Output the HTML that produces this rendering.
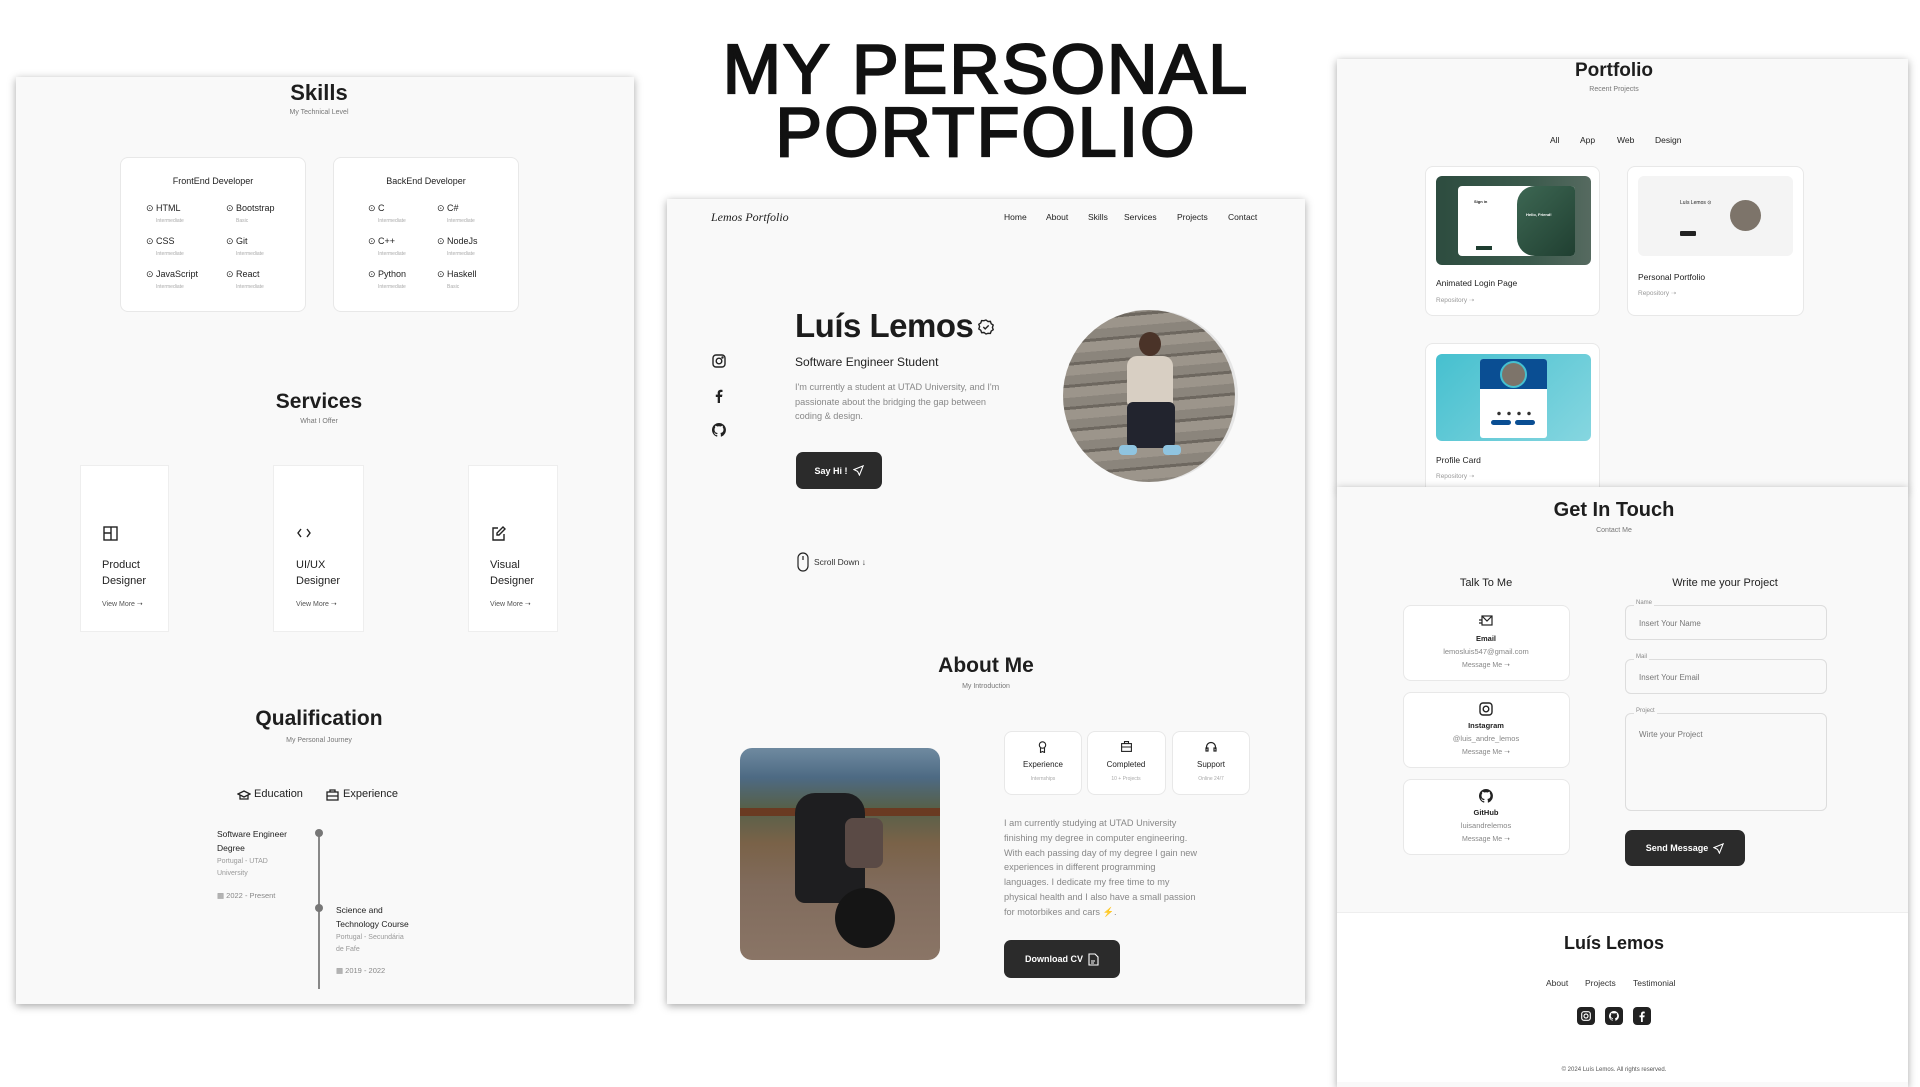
<!DOCTYPE html>
<html><head><meta charset="utf-8"><style>
*{margin:0;padding:0;box-sizing:border-box}
body{width:1920px;height:1080px;background:#fff;position:relative;overflow:hidden;font-family:"Liberation Sans",sans-serif;color:#222}
.a{position:absolute;white-space:nowrap}
.c{transform:translateX(-50%);text-align:center}
.panel{position:absolute;background:#f9f9f9;box-shadow:0 2px 8px rgba(0,0,0,.35)}
.h{font-weight:bold;color:#1e1e1e}
.sub{font-size:8px;color:#777}
.card{position:absolute;background:#fff;border:1px solid #e8e8e8;border-radius:8px}
.btn{position:absolute;background:#2b2b2b;color:#fff;border-radius:7px;font-size:9px;font-weight:bold;display:flex;align-items:center;justify-content:center;gap:5px}
.sk{font-size:9px;color:#222}
.sk small{display:block;font-size:5px;color:#aaa;margin-top:4px;margin-left:10px}
.gray{color:#777}
svg{display:block}
</style></head><body>

<!-- Title -->
<div class="a c" style="left:986px;top:38px;font-size:70px;font-weight:normal;-webkit-text-stroke:2.2px #111;line-height:63px;color:#111;letter-spacing:2px">MY PERSONAL<br>PORTFOLIO</div>

<!-- LEFT PANEL -->
<div class="panel" style="left:16px;top:77px;width:618px;height:927px"></div>
<div class="a c h" style="left:319px;top:80px;font-size:22px">Skills</div>
<div class="a c sub" style="left:319px;top:109px;font-size:7px">My Technical Level</div>

<div class="card" style="left:120px;top:157px;width:186px;height:155px"></div>
<div class="card" style="left:333px;top:157px;width:186px;height:155px"></div>
<div class="a c" style="left:213px;top:176px;font-size:9px">FrontEnd Developer</div>
<div class="a c" style="left:426px;top:176px;font-size:9px">BackEnd Developer</div>

<div class="a c h" style="left:319px;top:390px;font-size:21px">Services</div>
<div class="a c sub" style="left:319px;top:418px;font-size:7px">What I Offer</div>

<div class="a" style="left:80px;top:465px;width:89px;height:167px;background:#fff;border:1px solid #eee"></div>
<div class="a" style="left:273px;top:465px;width:91px;height:167px;background:#fff;border:1px solid #eee"></div>
<div class="a" style="left:468px;top:465px;width:90px;height:167px;background:#fff;border:1px solid #eee"></div>

<svg class="a" style="left:103px;top:526px" width="15" height="15" viewBox="0 0 15 15" fill="none" stroke="#222" stroke-width="1.4"><rect x="1" y="1" width="13" height="13"/><path d="M8 1v13M1 7h7"/></svg>
<svg class="a" style="left:297px;top:527px" width="14" height="12" viewBox="0 0 14 12" fill="none" stroke="#222" stroke-width="1.4"><path d="M4 2L1 6l3 4M10 2l3 4-3 4"/></svg>
<svg class="a" style="left:491px;top:526px" width="15" height="15" viewBox="0 0 15 15" fill="none" stroke="#222" stroke-width="1.4"><path d="M7 2H2v12h11V8"/><path d="M12 1l2 2-6 6H6V7z"/></svg>

<div class="a" style="left:102px;top:557px;font-size:11px;line-height:16px">Product<br>Designer</div>
<div class="a" style="left:296px;top:557px;font-size:11px;line-height:16px">UI/UX<br>Designer</div>
<div class="a" style="left:490px;top:557px;font-size:11px;line-height:16px">Visual<br>Designer</div>
<div class="a" style="left:102px;top:600px;font-size:7px;color:#555">View More ➝</div>
<div class="a" style="left:296px;top:600px;font-size:7px;color:#555">View More ➝</div>
<div class="a" style="left:490px;top:600px;font-size:7px;color:#555">View More ➝</div>

<div class="a c h" style="left:319px;top:707px;font-size:21px">Qualification</div>
<div class="a c sub" style="left:319px;top:737px;font-size:7px">My Personal Journey</div>

<svg class="a" style="left:237px;top:789px" width="14" height="12" viewBox="0 0 14 12" fill="none" stroke="#222" stroke-width="1.3"><path d="M1 5l6-3 6 3-6 3z"/><path d="M3 6v4h8V6"/></svg>
<div class="a" style="left:254px;top:788px;font-size:11px">Education</div>
<svg class="a" style="left:326px;top:789px" width="13" height="12" viewBox="0 0 13 12" fill="none" stroke="#222" stroke-width="1.3"><rect x="1" y="3" width="11" height="8"/><path d="M4 3V1h5v2M1 7h11"/></svg>
<div class="a" style="left:343px;top:788px;font-size:11px">Experience</div>

<div class="a" style="left:318px;top:833px;width:1.5px;height:156px;background:#888"></div>
<div class="a" style="left:315px;top:829px;width:8px;height:8px;border-radius:50%;background:#777"></div>
<div class="a" style="left:315px;top:904px;width:8px;height:8px;border-radius:50%;background:#777"></div>

<div class="a" style="left:217px;top:827px;font-size:8.5px;line-height:14px">Software Engineer<br>Degree</div>
<div class="a gray" style="left:217px;top:856px;font-size:7px;line-height:12px;color:#999">Portugal - UTAD<br>University</div>
<div class="a gray" style="left:217px;top:891px;font-size:7.5px;color:#888">▦ 2022 - Present</div>
<div class="a" style="left:336px;top:903px;font-size:8.5px;line-height:14px">Science and<br>Technology Course</div>
<div class="a" style="left:336px;top:932px;font-size:7px;line-height:12px;color:#999">Portugal - Secundária<br>de Fafe</div>
<div class="a" style="left:336px;top:966px;font-size:7.5px;color:#888">▦ 2019 - 2022</div>

<!-- MIDDLE PANEL -->
<div class="panel" style="left:667px;top:199px;width:638px;height:805px"></div>
<div class="a" style="left:711px;top:210px;font-size:12px;font-style:italic;font-family:'Liberation Serif',serif;color:#222">Lemos Portfolio</div>
<div class="a" style="left:1004px;top:212px;font-size:8.5px">Home</div>
<div class="a" style="left:1046px;top:212px;font-size:8.5px">About</div>
<div class="a" style="left:1088px;top:212px;font-size:8.5px">Skills</div>
<div class="a" style="left:1124px;top:212px;font-size:8.5px">Services</div>
<div class="a" style="left:1177px;top:212px;font-size:8.5px">Projects</div>
<div class="a" style="left:1228px;top:212px;font-size:8.5px">Contact</div>

<svg class="a" style="left:712px;top:354px" width="14" height="14" viewBox="0 0 14 14" fill="none" stroke="#222" stroke-width="1.4"><rect x="1" y="1" width="12" height="12" rx="3"/><circle cx="7" cy="7" r="2.8"/><circle cx="10.5" cy="3.5" r=".5" fill="#222"/></svg>
<svg class="a" style="left:714px;top:389px" width="10" height="14" viewBox="0 0 10 14"><path d="M6 14V8h2l.4-2.4H6V4.2c0-.7.3-1.2 1.3-1.2H8.5V.9C8 .8 7.4.7 6.8.7 5 .7 3.7 1.8 3.7 3.8v1.8H1.8V8h1.9v6z" fill="#222"/></svg>
<svg class="a" style="left:712px;top:423px" width="14" height="14" viewBox="0 0 16 16"><path fill="#222" d="M8 0a8 8 0 0 0-2.5 15.6c.4 0 .5-.2.5-.4v-1.5c-2.2.5-2.7-1-2.7-1-.4-.9-.9-1.2-.9-1.2-.7-.5.1-.5.1-.5.8.1 1.2.8 1.2.8.7 1.3 1.9.9 2.3.7.1-.5.3-.9.5-1.1-1.8-.2-3.6-.9-3.6-4 0-.9.3-1.6.8-2.1-.1-.2-.4-1 .1-2.1 0 0 .7-.2 2.2.8a7.6 7.6 0 0 1 4 0c1.5-1 2.2-.8 2.2-.8.4 1.1.2 1.9.1 2.1.5.6.8 1.3.8 2.1 0 3.1-1.9 3.8-3.6 4 .3.3.6.8.6 1.5v2.2c0 .2.1.5.6.4A8 8 0 0 0 8 0z"/></svg>

<div class="a" style="left:795px;top:307px;font-size:33px;font-weight:bold;color:#1c1c1c;letter-spacing:-0.5px">Luís Lemos</div>
<svg class="a" style="left:978px;top:319px" width="16" height="16" viewBox="0 0 16 16" fill="none" stroke="#222" stroke-width="1.4"><path d="M8 1l2 1.5 2.4-.1.8 2.3 2 1.4-.8 2.3.8 2.3-2 1.4-.8 2.3-2.4-.1L8 15l-2-1.5-2.4.1-.8-2.3-2-1.4.8-2.3-.8-2.3 2-1.4.8-2.3 2.4.1z"/><path d="M5.3 8l1.9 1.9 3.5-3.5"/></svg>
<div class="a" style="left:795px;top:355px;font-size:12px;color:#222">Software Engineer Student</div>
<div class="a" style="left:795px;top:380px;font-size:9.2px;line-height:14.5px;color:#888">I'm currently a student at UTAD University, and I'm<br>passionate about the bridging the gap between<br>coding &amp; design.</div>
<div class="btn" style="left:796px;top:452px;width:86px;height:37px">Say Hi ! <svg width="11" height="11" viewBox="0 0 12 12" fill="none" stroke="#fff" stroke-width="1.2"><path d="M11 1L1 5l4 2 2 4z"/></svg></div>

<div class="a" style="left:1063px;top:310px;width:172px;height:172px;border-radius:50%;overflow:hidden;background:repeating-linear-gradient(175deg,#8b857c 0 9px,#6d675f 9px 12px,#9c958b 12px 22px);box-shadow:3px 0 0 #e6e6e6">
 <div class="a" style="left:76px;top:22px;width:22px;height:24px;border-radius:50%;background:#4a3328"></div>
 <div class="a" style="left:64px;top:46px;width:46px;height:50px;border-radius:10px 10px 4px 4px;background:#d8cfc3"></div>
 <div class="a" style="left:64px;top:92px;width:48px;height:46px;background:#22242e;border-radius:6px"></div>
 <div class="a" style="left:56px;top:135px;width:18px;height:10px;background:#8fc4e0;border-radius:4px"></div>
 <div class="a" style="left:100px;top:135px;width:18px;height:10px;background:#8fc4e0;border-radius:4px"></div>
</div>

<svg class="a" style="left:797px;top:552px" width="12" height="20" viewBox="0 0 12 20" fill="none" stroke="#222" stroke-width="1.2"><rect x="1" y="1" width="10" height="18" rx="5"/><path d="M6 4v4"/></svg>
<div class="a" style="left:814px;top:557px;font-size:8.5px;color:#333">Scroll Down ↓</div>

<div class="a c h" style="left:986px;top:654px;font-size:21px">About Me</div>
<div class="a c sub" style="left:986px;top:683px;font-size:7px">My Introduction</div>

<div class="a" style="left:740px;top:748px;width:200px;height:212px;border-radius:12px;overflow:hidden;background:linear-gradient(180deg,#6f8aa0 0%,#4d6a83 14%,#56604a 28%,#7a6248 45%,#806b5c 65%,#8a7566 100%)">
 <div class="a" style="left:0;top:60px;width:200px;height:8px;background:#6a3a22"></div>
 <div class="a" style="left:55px;top:45px;width:70px;height:110px;border-radius:20px 20px 10px 10px;background:#1e1e20"></div>
 <div class="a" style="left:105px;top:70px;width:38px;height:50px;border-radius:8px;background:#5a4a45"></div>
 <div class="a" style="left:95px;top:140px;width:60px;height:60px;border-radius:50%;background:#151515"></div>
</div>

<div class="card" style="left:1004px;top:731px;width:78px;height:64px"></div>
<div class="card" style="left:1087px;top:731px;width:79px;height:64px"></div>
<div class="card" style="left:1172px;top:731px;width:78px;height:64px"></div>
<svg class="a" style="left:1038px;top:741px" width="9" height="12" viewBox="0 0 9 12" fill="none" stroke="#222" stroke-width="1.1"><circle cx="4.5" cy="4" r="3.2"/><path d="M2.5 7v4.5l2-1 2 1V7"/></svg>
<svg class="a" style="left:1121px;top:741px" width="11" height="11" viewBox="0 0 11 11" fill="none" stroke="#222" stroke-width="1.1"><rect x=".6" y="2.6" width="9.8" height="7.8"/><path d="M3.5 2.6V.6h4v2M.6 6h9.8"/></svg>
<svg class="a" style="left:1205px;top:741px" width="12" height="12" viewBox="0 0 12 12" fill="none" stroke="#222" stroke-width="1.2"><path d="M1.5 8V6a4.5 4.5 0 0 1 9 0v2"/><rect x="1" y="7" width="2" height="3"/><rect x="9" y="7" width="2" height="3"/></svg>
<div class="a c" style="left:1043px;top:760px;font-size:8px">Experience</div>
<div class="a c" style="left:1126px;top:760px;font-size:8px">Completed</div>
<div class="a c" style="left:1211px;top:760px;font-size:8px">Support</div>
<div class="a c" style="left:1043px;top:776px;font-size:5px;color:#aaa">Internships</div>
<div class="a c" style="left:1126px;top:776px;font-size:5px;color:#aaa">10 + Projects</div>
<div class="a c" style="left:1211px;top:776px;font-size:5px;color:#aaa">Online 24/7</div>

<div class="a" style="left:1004px;top:816px;font-size:9.2px;line-height:14.8px;color:#888">I am currently studying at UTAD University<br>finishing my degree in computer engineering.<br>With each passing day of my degree I gain new<br>experiences in different programming<br>languages. I dedicate my free time to my<br>physical health and I also have a small passion<br>for motorbikes and cars <span style="color:#f07a1a">⚡</span>.</div>
<div class="btn" style="left:1004px;top:940px;width:116px;height:38px">Download CV <svg width="11" height="13" viewBox="0 0 11 13" fill="none" stroke="#fff" stroke-width="1.1"><path d="M1 1h6l3 3v8H1z"/><path d="M3 8h4M3 10h3"/></svg></div>

<!-- RIGHT TOP PANEL -->
<div class="panel" style="left:1337px;top:59px;width:571px;height:430px"></div>
<div class="a c h" style="left:1614px;top:60px;font-size:19px">Portfolio</div>
<div class="a c sub" style="left:1614px;top:86px;font-size:7px">Recent Projects</div>
<div class="a" style="left:1550px;top:135px;font-size:8.5px">All</div>
<div class="a" style="left:1580px;top:135px;font-size:8.5px">App</div>
<div class="a" style="left:1617px;top:135px;font-size:8.5px">Web</div>
<div class="a" style="left:1655px;top:135px;font-size:8.5px">Design</div>

<div class="card" style="left:1425px;top:166px;width:175px;height:150px"></div>
<div class="card" style="left:1627px;top:166px;width:177px;height:150px"></div>
<div class="card" style="left:1425px;top:343px;width:175px;height:150px;border-bottom:none;border-radius:8px 8px 0 0"></div>

<div class="a" style="left:1436px;top:176px;width:155px;height:89px;border-radius:6px;background:linear-gradient(90deg,#2d4c3f,#3b5a4c 60%,#566a60)">
 <div class="a" style="left:22px;top:10px;width:117px;height:70px;background:#fff;border-radius:4px"></div>
 <div class="a" style="left:81px;top:10px;width:58px;height:70px;background:linear-gradient(135deg,#3d6753,#203f31);border-radius:18px 4px 4px 18px"></div>
 <div class="a" style="left:38px;top:23px;font-size:4px;font-weight:bold;color:#222">Sign in</div>
 <div class="a" style="left:90px;top:36px;font-size:4px;font-weight:bold;color:#fff">Hello, Friend!</div>
 <div class="a" style="left:40px;top:70px;width:16px;height:4px;background:#1e3d30"></div>
</div>
<div class="a" style="left:1436px;top:278px;font-size:8.5px">Animated Login Page</div>
<div class="a" style="left:1436px;top:296px;font-size:6.5px;color:#999">Repository ➝</div>

<div class="a" style="left:1638px;top:176px;width:155px;height:80px;border-radius:6px;background:#f4f4f4">
 <div class="a" style="left:42px;top:24px;font-size:5px">Luís Lemos ⊙</div>
 <div class="a" style="left:42px;top:55px;width:16px;height:5px;background:#222;border-radius:1px"></div>
 <div class="a" style="left:92px;top:24px;width:31px;height:31px;border-radius:50%;background:#7d746a"></div>
</div>
<div class="a" style="left:1638px;top:272px;font-size:8.5px">Personal Portfolio</div>
<div class="a" style="left:1638px;top:289px;font-size:6.5px;color:#999">Repository ➝</div>

<div class="a" style="left:1436px;top:354px;width:155px;height:87px;border-radius:6px;background:linear-gradient(135deg,#46c0cf,#86d6e0)">
 <div class="a" style="left:44px;top:5px;width:67px;height:79px;background:#fff;border-radius:3px;overflow:hidden">
  <div style="height:30px;background:#0a4e93"></div>
 </div>
 <div class="a" style="left:64px;top:7px;width:27px;height:27px;border-radius:50%;background:#7d746a;border:2px solid #46c0cf"></div>
 <div class="a" style="left:58px;top:57px;width:40px;height:5px;background:radial-gradient(circle,#333 1.5px,transparent 2px) 0 0/10px 5px"></div>
 <div class="a" style="left:55px;top:66px;width:20px;height:5px;background:#0a4e93;border-radius:3px"></div>
 <div class="a" style="left:79px;top:66px;width:20px;height:5px;background:#0a4e93;border-radius:3px"></div>
</div>
<div class="a" style="left:1436px;top:455px;font-size:8.5px">Profile Card</div>
<div class="a" style="left:1436px;top:472px;font-size:6.5px;color:#999">Repository ➝</div>

<!-- RIGHT BOTTOM PANEL -->
<div class="panel" style="left:1337px;top:487px;width:571px;height:600px"></div>
<div class="a" style="left:1337px;top:912px;width:571px;height:170px;background:#fff;border-top:1px solid #eee"></div>
<div class="a c h" style="left:1614px;top:499px;font-size:20px">Get In Touch</div>
<div class="a c sub" style="left:1614px;top:527px;font-size:7px">Contact Me</div>
<div class="a c" style="left:1486px;top:577px;font-size:11px">Talk To Me</div>
<div class="a c" style="left:1725px;top:577px;font-size:11px">Write me your Project</div>

<div class="card" style="left:1403px;top:605px;width:167px;height:76px"></div>
<div class="card" style="left:1403px;top:692px;width:167px;height:76px"></div>
<div class="card" style="left:1403px;top:779px;width:167px;height:76px"></div>

<svg class="a" style="left:1479px;top:615px" width="14" height="12" viewBox="0 0 14 12" fill="none" stroke="#222" stroke-width="1.2"><rect x="3" y="1" width="10" height="9"/><path d="M3 1l5 5 5-5M0 5h3M0 8h3"/></svg>
<div class="a c" style="left:1486px;top:634px;font-size:7.5px;font-weight:bold">Email</div>
<div class="a c" style="left:1486px;top:647px;font-size:7.5px;color:#888">lemosluis547@gmail.com</div>
<div class="a c" style="left:1486px;top:661px;font-size:7px;color:#888">Message Me ➝</div>

<svg class="a" style="left:1479px;top:702px" width="14" height="14" viewBox="0 0 14 14" fill="none" stroke="#222" stroke-width="1.4"><rect x="1" y="1" width="12" height="12" rx="3"/><circle cx="7" cy="7" r="2.8"/></svg>
<div class="a c" style="left:1486px;top:721px;font-size:7.5px;font-weight:bold">Instagram</div>
<div class="a c" style="left:1486px;top:734px;font-size:7.5px;color:#888">@luis_andre_lemos</div>
<div class="a c" style="left:1486px;top:748px;font-size:7px;color:#888">Message Me ➝</div>

<svg class="a" style="left:1479px;top:789px" width="14" height="14" viewBox="0 0 16 16"><path fill="#222" d="M8 0a8 8 0 0 0-2.5 15.6c.4 0 .5-.2.5-.4v-1.5c-2.2.5-2.7-1-2.7-1-.4-.9-.9-1.2-.9-1.2-.7-.5.1-.5.1-.5.8.1 1.2.8 1.2.8.7 1.3 1.9.9 2.3.7.1-.5.3-.9.5-1.1-1.8-.2-3.6-.9-3.6-4 0-.9.3-1.6.8-2.1-.1-.2-.4-1 .1-2.1 0 0 .7-.2 2.2.8a7.6 7.6 0 0 1 4 0c1.5-1 2.2-.8 2.2-.8.4 1.1.2 1.9.1 2.1.5.6.8 1.3.8 2.1 0 3.1-1.9 3.8-3.6 4 .3.3.6.8.6 1.5v2.2c0 .2.1.5.6.4A8 8 0 0 0 8 0z"/></svg>
<div class="a c" style="left:1486px;top:808px;font-size:7.5px;font-weight:bold">GitHub</div>
<div class="a c" style="left:1486px;top:821px;font-size:7.5px;color:#888">luisandrelemos</div>
<div class="a c" style="left:1486px;top:835px;font-size:7px;color:#888">Message Me ➝</div>

<div class="a" style="left:1625px;top:605px;width:202px;height:35px;border:1.5px solid #ddd;border-radius:6px"></div>
<div class="a" style="left:1634px;top:600px;font-size:6px;color:#888;background:#f9f9f9;padding:0 2px">Name</div>
<div class="a" style="left:1639px;top:619px;font-size:8px;color:#777">Insert Your Name</div>
<div class="a" style="left:1625px;top:659px;width:202px;height:35px;border:1.5px solid #ddd;border-radius:6px"></div>
<div class="a" style="left:1634px;top:654px;font-size:6px;color:#888;background:#f9f9f9;padding:0 2px">Mail</div>
<div class="a" style="left:1639px;top:673px;font-size:8px;color:#777">Insert Your Email</div>
<div class="a" style="left:1625px;top:713px;width:202px;height:98px;border:1.5px solid #ddd;border-radius:6px"></div>
<div class="a" style="left:1634px;top:708px;font-size:6px;color:#888;background:#f9f9f9;padding:0 2px">Project</div>
<div class="a" style="left:1639px;top:730px;font-size:8px;color:#777">Wirte your Project</div>
<div class="btn" style="left:1625px;top:830px;width:120px;height:36px">Send Message <svg width="11" height="11" viewBox="0 0 12 12" fill="none" stroke="#fff" stroke-width="1.2"><path d="M11 1L1 5l4 2 2 4z"/></svg></div>

<div class="a c" style="left:1614px;top:933px;font-size:18px;font-weight:bold;color:#1c1c1c">Luís Lemos</div>
<div class="a" style="left:1546px;top:978px;font-size:8.5px;color:#333">About</div>
<div class="a" style="left:1585px;top:978px;font-size:8.5px;color:#333">Projects</div>
<div class="a" style="left:1633px;top:978px;font-size:8.5px;color:#333">Testimonial</div>
<div class="a" style="left:1577px;top:1007px;width:18px;height:18px;background:#222;border-radius:4px"></div>
<div class="a" style="left:1605px;top:1007px;width:18px;height:18px;background:#222;border-radius:4px"></div>
<div class="a" style="left:1633px;top:1007px;width:18px;height:18px;background:#222;border-radius:4px"></div>
<svg class="a" style="left:1581px;top:1011px" width="10" height="10" viewBox="0 0 14 14" fill="none" stroke="#fff" stroke-width="1.6"><rect x="1" y="1" width="12" height="12" rx="3"/><circle cx="7" cy="7" r="2.8"/></svg>
<svg class="a" style="left:1609px;top:1011px" width="10" height="10" viewBox="0 0 16 16"><path fill="#fff" d="M8 0a8 8 0 0 0-2.5 15.6c.4 0 .5-.2.5-.4v-1.5c-2.2.5-2.7-1-2.7-1-.4-.9-.9-1.2-.9-1.2-.7-.5.1-.5.1-.5.8.1 1.2.8 1.2.8.7 1.3 1.9.9 2.3.7.1-.5.3-.9.5-1.1-1.8-.2-3.6-.9-3.6-4 0-.9.3-1.6.8-2.1-.1-.2-.4-1 .1-2.1 0 0 .7-.2 2.2.8a7.6 7.6 0 0 1 4 0c1.5-1 2.2-.8 2.2-.8.4 1.1.2 1.9.1 2.1.5.6.8 1.3.8 2.1 0 3.1-1.9 3.8-3.6 4 .3.3.6.8.6 1.5v2.2c0 .2.1.5.6.4A8 8 0 0 0 8 0z"/></svg>
<svg class="a" style="left:1638px;top:1011px" width="8" height="11" viewBox="0 0 10 14"><path d="M6 14V8h2l.4-2.4H6V4.2c0-.7.3-1.2 1.3-1.2H8.5V.9C8 .8 7.4.7 6.8.7 5 .7 3.7 1.8 3.7 3.8v1.8H1.8V8h1.9v6z" fill="#fff"/></svg>
<div class="a c" style="left:1614px;top:1067px;font-size:6px;color:#555">© 2024 Luís Lemos. All rights reserved.</div>

<!-- skill items -->
<div class="a sk" style="left:146px;top:203px">⊙ HTML<small>Intermediate</small></div>
<div class="a sk" style="left:226px;top:203px">⊙ Bootstrap<small>Basic</small></div>
<div class="a sk" style="left:146px;top:236px">⊙ CSS<small>Intermediate</small></div>
<div class="a sk" style="left:226px;top:236px">⊙ Git<small>Intermediate</small></div>
<div class="a sk" style="left:146px;top:269px">⊙ JavaScript<small>Intermediate</small></div>
<div class="a sk" style="left:226px;top:269px">⊙ React<small>Intermediate</small></div>
<div class="a sk" style="left:368px;top:203px">⊙ C<small>Intermediate</small></div>
<div class="a sk" style="left:437px;top:203px">⊙ C#<small>Intermediate</small></div>
<div class="a sk" style="left:368px;top:236px">⊙ C++<small>Intermediate</small></div>
<div class="a sk" style="left:437px;top:236px">⊙ NodeJs<small>Intermediate</small></div>
<div class="a sk" style="left:368px;top:269px">⊙ Python<small>Intermediate</small></div>
<div class="a sk" style="left:437px;top:269px">⊙ Haskell<small>Basic</small></div>

</body></html>
